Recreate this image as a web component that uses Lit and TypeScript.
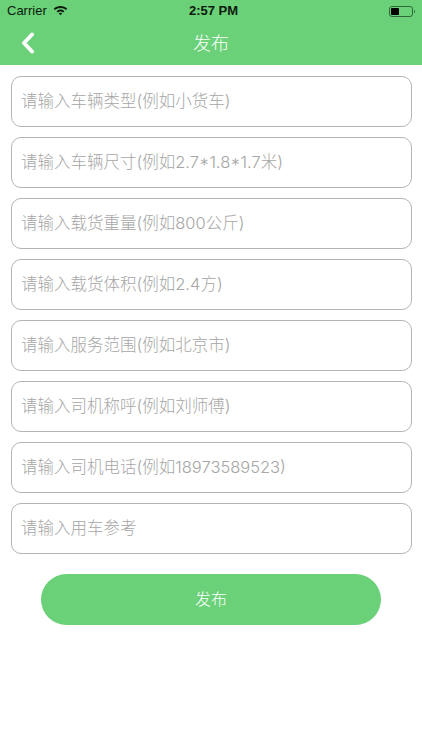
import { LitElement, html, css, svg } from "lit";
import { customElement } from "lit/decorators.js";

const FIELDS = [
  "请输入车辆类型(例如小货车)",
  "请输入车辆尺寸(例如2.7*1.8*1.7米)",
  "请输入载货重量(例如800公斤)",
  "请输入载货体积(例如2.4方)",
  "请输入服务范围(例如北京市)",
  "请输入司机称呼(例如刘师傅)",
  "请输入司机电话(例如18973589523)",
  "请输入用车参考",
];

@customElement("app-root")
export class AppRoot extends LitElement {
  static styles = css`
    :host {
      display: block;
      width: 422px;
      height: 750px;
      background: #fff;
      font-family: "Liberation Sans", "Noto Sans CJK SC", sans-serif;
      overflow: hidden;
    }
    .header {
      background: #6bd178;
      height: 65px;
      display: flex;
      flex-direction: column;
    }
    .status {
      height: 21px;
      padding: 0 6px 0 7px;
      display: grid;
      grid-template-columns: 1fr auto 1fr;
      align-items: center;
      font-size: 13px;
      color: #0c1a0e;
    }
    .status-left {
      display: flex;
      align-items: center;
      gap: 6px;
    }
    .time {
      font-weight: 700;
      margin-left: 4px;
    }
    .status-right {
      display: flex;
      justify-content: flex-end;
    }
    .nav {
      flex: 1;
      display: grid;
      grid-template-columns: 1fr auto 1fr;
      align-items: center;
    }
    .nav svg {
      display: block;
      margin-left: 21px;
    }
    .title {
      color: #fff;
      font-family: "Noto Sans CJK SC", sans-serif;
      font-size: 18px;
      font-weight: 300;
      line-height: 24px;
      margin-top: -2px;
    }
    .form {
      display: flex;
      flex-direction: column;
      gap: 10px;
      padding: 11px 10px 0 11px;
    }
    .field {
      height: 51px;
      box-sizing: border-box;
      border: 1px solid #b4b4b4;
      border-radius: 10px;
      display: flex;
      align-items: center;
      padding: 0 0 3px 9px;
      font-family: "Inter", "Noto Sans CJK SC", sans-serif;
      font-size: 16.5px;
      font-weight: 300;
      color: #a6a6a6;
      white-space: nowrap;
    }
    .submit {
      margin: 20px 41px 0 41px;
      width: 340px;
      height: 51px;
      border-radius: 25.5px;
      background: #6bd178;
      color: #fff;
      font-family: "Noto Sans CJK SC", sans-serif;
      font-size: 16px;
      font-weight: 300;
      box-sizing: border-box;
      padding-bottom: 3px;
      display: flex;
      align-items: center;
      justify-content: center;
    }
  `;

  render() {
    return html`
      <div class="header">
        <div class="status">
          <div class="status-left">
            <span>Carrier</span>
            <svg width="15" height="11" viewBox="0 0 15 11">
              <path fill="#0c1a0e" d="M7.5 1C4.9 1 2.500 2 .7 3.700l1.300 1.400C3.500 3.700 5.400 2.900 7.500 2.900s4 .8 5.500 2.200l1.300-1.400C12.500 2 10.100 1 7.500 1z"/>
              <path fill="#0c1a0e" d="M7.500 4.600c-1.500 0-2.900.6-3.900 1.600l1.300 1.300c.7-.7 1.600-1 2.600-1s1.900.3 2.600 1l1.300-1.300c-1-1-2.400-1.600-3.900-1.600z"/>
              <path fill="#0c1a0e" d="M7.500 7.800c-.7 0-1.300.3-1.700.7l1.700 1.800 1.700-1.800c-.4-.4-1-.7-1.700-.7z"/>
            </svg>
          </div>
          <span class="time">2:57 PM</span>
          <div class="status-right">
            <svg width="27" height="12" viewBox="0 0 27 12">
              ${svg`<rect x="0.5" y="1.500" width="23" height="10" rx="2.500" fill="none" stroke="#2f6b38" stroke-width="1"/>
              <rect x="2" y="3" width="8" height="7" rx="0.8" fill="#000"/>
              <path d="M25 5v3c.7-.2 1-.8 1-1.500S25.700 5.200 25 5z" fill="#2f6b38"/>`}
            </svg>
          </div>
        </div>
        <div class="nav">
          <svg width="14" height="22" viewBox="0 0 14 22">
            <path d="M11 2.500L3 11l8 8.500" fill="none" stroke="#fff" stroke-width="4" stroke-linecap="round" stroke-linejoin="round"/>
          </svg>
          <span class="title">发布</span>
          <span></span>
        </div>
      </div>
      <div class="form">
        ${FIELDS.map((f) => html`<div class="field">${f}</div>`)}
      </div>
      <div class="submit">发布</div>
    `;
  }
}
